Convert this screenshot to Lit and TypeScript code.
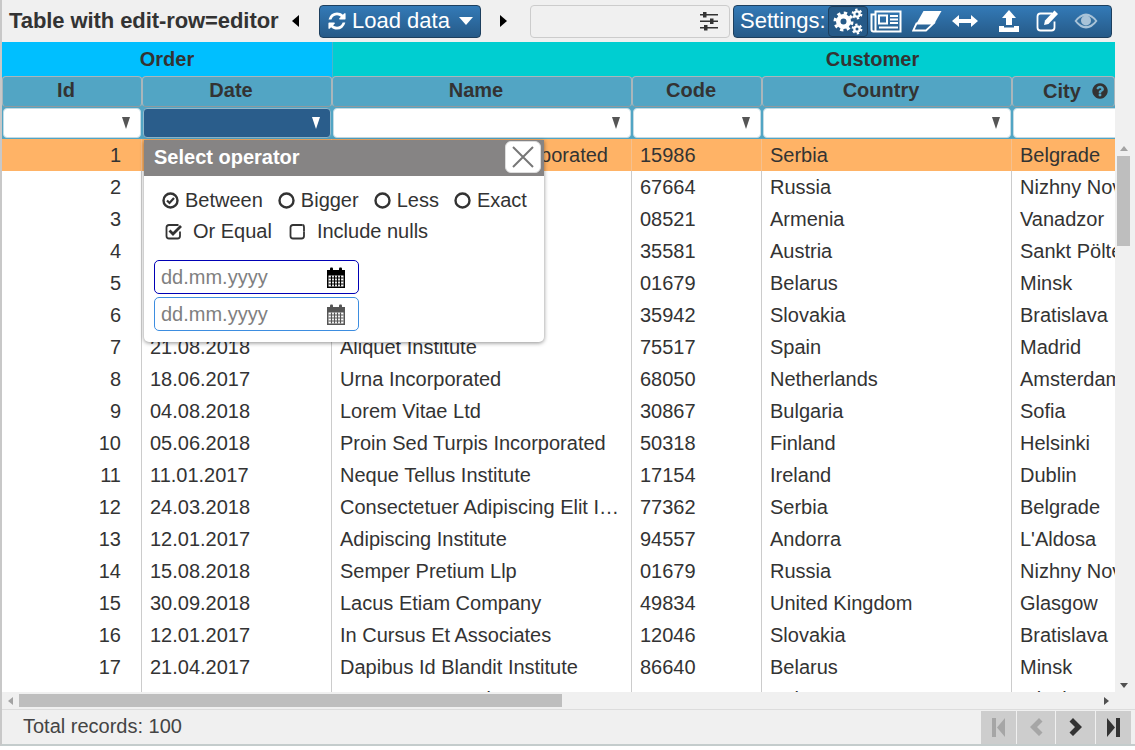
import { LitElement, html, css, svg } from 'lit';
import { customElement } from 'lit/decorators.js';

const refreshPath = 'M1639 1056q0 5-1 7-64 268-268 434.5t-478 166.5q-146 0-282.5-55t-243.5-157l-129 129q-19 19-45 19t-45-19-19-45v-448q0-26 19-45t45-19h448q26 0 45 19t19 45-19 45l-137 137q71 66 161 102t187 36q134 0 250-65t186-179q11-17 53-117 8-23 30-23h192q13 0 22.5 9.5t9.5 22.5zm25-800v448q0 26-19 45t-45 19h-448q-26 0-45-19t-19-45 19-45l138-138q-148-137-349-137-134 0-250 65t-186 179q-11 17-53 117-8 23-30 23h-199q-13 0-22.5-9.5t-9.5-22.5v-7q65-268 270-434.5t480-166.5q146 0 284 55.5t245 156.5l130-129q19-19 45-19t45 19 19 45z';
const questionPath = 'M1024 1376v-192q0-14-9-23t-23-9h-192q-14 0-23 9t-9 23v192q0 14 9 23t23 9h192q14 0 23-9t9-23zm256-672q0-88-55.5-163t-138.5-116-170-41q-243 0-371 213-15 24 8 42l132 100q7 6 19 6 16 0 25-12 53-68 86-92 34-24 86-24 48 0 85.5 26t37.5 59q0 38-20 61t-68 45q-63 28-115.5 86.5t-52.5 125.5v36q0 14 9 23t23 9h192q14 0 23-9t9-23q0-19 21.5-49.5t54.5-49.5q32-18 49-28.5t46-35 44.5-48 28-60.5 12.5-81zm384 192q0 209-103 385.5t-279.5 279.5-385.5 103-385.5-103-279.5-279.5-103-385.5 103-385.5 279.5-279.5 385.5-103 385.5 103 279.5 279.5 103 385.5z';

// outer ring of dashes makes the teeth, thick inner ring the body with its hole
const gear = (cx: number, cy: number, hole: number, body: number, tip: number, teeth: number) => {
  const toothR = (body + tip) / 2 - 0.3;
  const dash = (2 * Math.PI * toothR) / (teeth * 2);
  return svg`<circle cx=${cx} cy=${cy} r=${toothR} fill="none" stroke="#fff" stroke-width=${tip - body + 0.6} stroke-dasharray="${dash} ${dash}"/>
    <circle cx=${cx} cy=${cy} r=${(hole + body) / 2} fill="none" stroke="#fff" stroke-width=${body - hole}/>`;
};

const cogsIcon = html`<svg width="30" height="27" viewBox="0 0 30 27">
  ${gear(10.500, 13.500, 3, 7.500, 10, 8)}${gear(24, 6, 1.500, 3.800, 5.400, 6)}${gear(24, 21, 1.500, 3.800, 5.400, 6)}</svg>`;

const newsIcon = html`<svg width="32" height="25" viewBox="0 0 32 25" fill="none" stroke="#fff">
  <path d="M5.5 2.5h25v20h-25zM5.5 5.5h-4v15q0 2 2 2h2" stroke-width="2"/>
  <rect x="9" y="6.5" width="8" height="8" stroke-width="2"/>
  <path d="M20 7h8M20 10.500h8M20 14h8M9 18.500h19" stroke-width="2"/></svg>`;

const eraserIcon = html`<svg width="30" height="25" viewBox="0 0 30 25">
  <path d="M11.500 2h18l-7 12.500H4.500z" fill="#fff"/>
  <path d="M4.500 14.500L1.200 21.500h12.800l7.500-7z" fill="none" stroke="#fff" stroke-width="1.800"/></svg>`;

const arrowsIcon = html`<svg width="28" height="16" viewBox="0 0 28 16" fill="#fff">
  <path d="M1 8l7-6v4h12V2l7 6-7 6v-4H8v4z"/></svg>`;

const uploadIcon = html`<svg width="22" height="23" viewBox="0 0 22 23" fill="#fff">
  <path d="M11 0l7 8h-4v7H8V8H4z"/>
  <path d="M1 16h5v1.500h10V16h5v6H1z"/></svg>`;

const editIcon = html`<svg width="23" height="22" viewBox="0 0 23 22">
  <path d="M16 3.500H4.500q-3 0-3 3v11q0 3 3 3h11q3 0 3-3v-6" fill="none" stroke="#fff" stroke-width="1.800"/>
  <path d="M18.500.5l3.500 3.500-9.500 10-4.500 1 1-4.500z" fill="#fff"/></svg>`;

const eyeIcon = html`<svg width="24" height="16" viewBox="0 0 24 16">
  <path d="M.5 8Q6 .5 12 .5T23.500 8Q18 15.500 12 15.500T.5 8z" fill="#a9c3d8"/>
  <path d="M2.800 8Q7 3 12 3t9.200 5Q17 13 12 13T2.800 8z" fill="#35709f"/>
  <circle cx="12" cy="7.500" r="5" fill="#a9c3d8"/></svg>`;

const slidersIcon = html`<svg class="sliders" width="20" height="20" viewBox="0 0 20 20" fill="#333">
  <path d="M1 3h18v1.500H1zM1 9.500h18V11H1zM1 16h18v1.500H1z"/>
  <rect x="4" y="1" width="3.500" height="5.500"/><rect x="11" y="7.500" width="3.500" height="5.500"/><rect x="5" y="14" width="3.500" height="5.500"/></svg>`;

const calendar = (c: string) => html`<svg class="cal" width="20" height="21" viewBox="0 0 20 21">
  <rect x="1" y="3" width="18" height="18" fill=${c}/>
  <rect x="4" y="0.500" width="3" height="4" rx="1" fill=${c}/><rect x="13" y="0.500" width="3" height="4" rx="1" fill=${c}/>
  <path d="M2.500 8.500h15v11h-15z" fill="#fff"/>
  <path d="M2.500 11h15M2.500 14h15M2.500 17h15M5.500 8.500v11M8.500 8.500v11M11.500 8.500v11M14.500 8.500v11" stroke=${c} stroke-width="1.200"/></svg>`;

const radioIcon = (on: boolean) => html`<svg class="mark" width="17" height="17" viewBox="0 0 17 17">
  <circle cx="8.500" cy="8.500" r="7" fill="none" stroke="#333" stroke-width="2.400"/>
  ${on ? svg`<path d="M5 8.500l2.500 2.500 4.500-5" fill="none" stroke="#333" stroke-width="2.200"/>` : ''}</svg>`;

const checkIcon = (on: boolean) => html`<svg class="mark" width="18" height="17" viewBox="0 0 18 17">
  <path d="M15 8.500v4.500q0 2.500-2.500 2.500H4q-2.500 0-2.500-2.500V4.500Q1.500 2 4 2h9.500" fill="none" stroke="#333" stroke-width="1.800"/>
  ${on
    ? svg`<path d="M4.500 7.500l3.500 3.500 8-8" fill="none" stroke="#333" stroke-width="2.800"/>`
    : svg`<path d="M13.500 2q1.500 0 1.500 2.500v4" fill="none" stroke="#333" stroke-width="1.800"/>`}</svg>`;

const rows = [
  ['1', '12.04.2017', 'Vestibulum Nunc Incorporated', '15986', 'Serbia', 'Belgrade'],
  ['2', '18.02.2018', 'Mauris Institute', '67664', 'Russia', 'Nizhny Novgorod'],
  ['3', '03.05.2017', 'Tempor Corp', '08521', 'Armenia', 'Vanadzor'],
  ['4', '27.09.2017', 'Eget Ltd', '35581', 'Austria', 'Sankt Pölten'],
  ['5', '09.11.2018', 'Donec Associates', '01679', 'Belarus', 'Minsk'],
  ['6', '14.07.2018', 'Nunc Foundation', '35942', 'Slovakia', 'Bratislava'],
  ['7', '21.08.2018', 'Aliquet Institute', '75517', 'Spain', 'Madrid'],
  ['8', '18.06.2017', 'Urna Incorporated', '68050', 'Netherlands', 'Amsterdam'],
  ['9', '04.08.2018', 'Lorem Vitae Ltd', '30867', 'Bulgaria', 'Sofia'],
  ['10', '05.06.2018', 'Proin Sed Turpis Incorporated', '50318', 'Finland', 'Helsinki'],
  ['11', '11.01.2017', 'Neque Tellus Institute', '17154', 'Ireland', 'Dublin'],
  ['12', '24.03.2018', 'Consectetuer Adipiscing Elit Institute', '77362', 'Serbia', 'Belgrade'],
  ['13', '12.01.2017', 'Adipiscing Institute', '94557', 'Andorra', "L'Aldosa"],
  ['14', '15.08.2018', 'Semper Pretium Llp', '01679', 'Russia', 'Nizhny Novgorod'],
  ['15', '30.09.2018', 'Lacus Etiam Company', '49834', 'United Kingdom', 'Glasgow'],
  ['16', '12.01.2017', 'In Cursus Et Associates', '12046', 'Slovakia', 'Bratislava'],
  ['17', '21.04.2017', 'Dapibus Id Blandit Institute', '86640', 'Belarus', 'Minsk'],
  ['18', '21.08.2018', 'Cras Tempus Ltd', '64646', 'Belarus', 'Minsk'],
];

const columns = ['Id', 'Date', 'Name', 'Code', 'Country', 'City'];

@customElement('app-root')
export class AppRoot extends LitElement {
  static styles = css`
    :host {
      display: block;
      width: 1135px;
      height: 746px;
      font-family: 'Liberation Sans', Arial, sans-serif;
      color: #333;
      font-size: 20px;
    }
    * { box-sizing: border-box; }
    .frame {
      position: relative;
      height: 746px;
      display: flex;
      flex-direction: column;
      background: #f0f0f0;
      border-left: 2px solid #c8c8c8;
      border-bottom: 2px solid #c4cccc;
      overflow: hidden;
    }

    .toolbar {
      height: 42px;
      flex: none;
      display: flex;
      align-items: center;
    }
    .title {
      font-size: 22px;
      font-weight: bold;
      letter-spacing: -0.08px;
      margin-left: 7px;
      width: 270px;
      white-space: nowrap;
    }
    .tri-l, .tri-r { width: 0; height: 0; border-top: 6px solid transparent; border-bottom: 6px solid transparent; }
    .tri-l { margin-left: 13px; border-right: 7px solid #000; }
    .tri-r { margin-left: 19px; border-left: 7px solid #000; }
    .btn {
      height: 33px;
      border: 1px solid #1d3f5e;
      border-radius: 4px;
      background: linear-gradient(#337ab7, #265a88);
      color: #fff;
      font-size: 22px;
      display: flex;
      align-items: center;
    }
    .load { width: 162px; margin-left: 20px; padding-left: 7px; }
    .load svg { width: 20px; height: 20px; fill: #fff; margin-right: 5px; }
    .caret { margin-left: 9px; border-top: 8px solid #fff; border-left: 7px solid transparent; border-right: 7px solid transparent; }
    .search {
      width: 200px;
      height: 33px;
      margin-left: 23px;
      border: 1px solid #ccc;
      border-radius: 4px;
      display: flex;
      align-items: center;
      justify-content: flex-end;
      padding-right: 10px;
    }
    .settings { width: 379px; margin-left: 3px; padding-left: 6px; }
    .icon-btn { display: flex; align-items: center; justify-content: center; }
    .cog {
      width: 40px;
      height: 31px;
      margin-left: 2px;
      border: 1px solid #1d3f5e;
      border-radius: 4px;
      background: #265a88;
    }
    .news { margin-left: 2px; }
    .erase { margin-left: 10px; }
    .arrows { margin-left: 9px; }
    .upload { margin-left: 19px; }
    .edit { margin-left: 16px; }
    .eye { margin-left: 15px; }

    .table {
      flex: none;
      display: flex;
      width: 1133px;
      height: 650px;
    }
    .view {
      width: 1113px;
      height: 650px;
      overflow: hidden;
      background: #fff;
    }
    .inner { width: 1410px; }
    .groups { height: 33px; display: grid; grid-template-columns: 330px 1080px; font-weight: bold; line-height: 35px; text-align: center; }
    .g-order { background: #00bfff; }
    .g-customer { background: #00ced1; border-left: 1px solid #4ab5cc; }
    .cols, .row, .filters {
      display: grid;
      grid-template-columns: 140px 190px 300px 130px 250px 190px;
    }
    .cols { height: 32px; background: #52a5c4; border-top: 1px solid #4ab5cc; }
    .head {
      border: 1px solid #a9b6bb;
      border-bottom-color: #8e9a9f;
      border-radius: 4px;
      font-weight: bold;
      line-height: 26px;
      text-align: center;
      padding-right: 12px;
    }
    .head.city { text-align: left; padding: 0 0 2px 30px; display: flex; align-items: center; gap: 10px; width: 103px; white-space: nowrap; }
    .head.city svg { width: 18px; height: 18px; fill: #333; flex: none; }
    .filters { height: 32px; background: #52a5c4; padding-bottom: 1px; }
    .filter {
      margin: 1px 1px 0 1px;
      background: #fff;
      border-radius: 4px;
      display: flex;
      align-items: center;
      justify-content: flex-end;
      padding-right: 10px;
      border: 1px solid #c4dbe4;
    }
    .filter.on { background: #2a5d8b; border-color: #8fb8cc; }
    .filter i { border-top: 12px solid #555; border-left: 4px solid transparent; border-right: 4px solid transparent; }
    .filter.on i { border-top-color: #fff; }
    .filter.last i { display: none; }
    .row { height: 32px; line-height: 32px; }
    .row.sel { background: #ffb366; }
    .cell {
      padding: 0 8px;
      border-right: 1px solid #ccc;
      white-space: nowrap;
      overflow: hidden;
      text-overflow: ellipsis;
    }
    .cell.num { text-align: right; padding-right: 20px; }
    .row .cell:last-child { border-right: 0; overflow: visible; }
    .row.sel .cell { border-right-color: #f5c08f; }

    .vscroll { width: 18px; position: relative; }
    .vup { position: absolute; left: 5px; top: 104px; border-bottom: 5px solid #a3a3a3; border-left: 4px solid transparent; border-right: 4px solid transparent; }
    .vthumb { position: absolute; left: 2px; top: 114px; width: 13px; height: 90px; background: #bebebe; }
    .vdown { position: absolute; left: 5px; top: 641px; border-top: 5px solid #505050; border-left: 4px solid transparent; border-right: 4px solid transparent; }

    .hscroll { flex: none; height: 17px; position: relative; }
    .hleft { position: absolute; left: 6px; top: 5px; border-right: 5px solid #a3a3a3; border-top: 4px solid transparent; border-bottom: 4px solid transparent; }
    .hthumb { position: absolute; left: 17px; top: 2px; width: 543px; height: 13px; background: #bebebe; }
    .hright { position: absolute; left: 1102px; top: 5px; border-left: 5px solid #505050; border-top: 4px solid transparent; border-bottom: 4px solid transparent; }

    .footer {
      flex: 1;
      display: flex;
      align-items: center;
      justify-content: space-between;
      border-top: 1px solid #dcdcdc;
      padding-left: 21px;
      padding-right: 4px;
      color: #444;
    }
    .total { margin-bottom: 2px; }
    .pager { display: flex; gap: 1px; }
    .pg { height: 33px; background: #cdcdcd; display: flex; align-items: center; justify-content: center; }
    .pg svg { fill: #333; }
    .pg.off svg { fill: #a6a6a6; }

    .popup {
      position: absolute;
      left: 142px;
      top: 140px;
      width: 400px;
      height: 202px;
      background: #fff;
      border-radius: 0 0 5px 5px;
      box-shadow: 0 1px 4px rgba(0, 0, 0, 0.45);
    }
    .pop-head {
      height: 36px;
      background: #868484;
      color: #fff;
      font-weight: bold;
      display: flex;
      align-items: center;
      justify-content: space-between;
      padding: 0 3px 2px 10px;
    }
    .close {
      width: 36px;
      height: 32px;
      align-self: flex-start;
      margin-top: 1px;
      background: #fff;
      border: 1px solid #ddd;
      border-radius: 6px;
      display: flex;
      align-items: center;
      justify-content: center;
    }
    .pop-body { padding: 9px 10px 0; }
    .opts { display: flex; align-items: center; height: 31px; padding-left: 8px; white-space: nowrap; }
    .opt { display: flex; align-items: center; gap: 6px; margin-right: 15px; }
    .opts.two { padding-left: 11px; }
    .opts.two .opt { gap: 10px; margin-right: 17px; }
    .date {
      width: 205px;
      height: 34px;
      border: 1px solid #3d8de0;
      border-radius: 5px;
      display: flex;
      align-items: center;
      justify-content: space-between;
      padding: 0 12px 0 6px;
      color: #808080;
      margin-top: 3px;
    }
    .date.focus { border-color: #0000b5; margin-top: 13px; }
  `;

  render() {
    return html`
      <div class="frame">
        <div class="toolbar">
          <div class="title">Table with edit-row=editor</div>
          <div class="tri-l"></div>
          <div class="btn load">
            <svg viewBox="0 0 1792 1792"><path d=${refreshPath}/></svg>
            Load data<span class="caret"></span>
          </div>
          <div class="tri-r"></div>
          <div class="search">${slidersIcon}</div>
          <div class="btn settings">
            Settings:
            <span class="icon-btn cog">${cogsIcon}</span>
            <span class="icon-btn news">${newsIcon}</span>
            <span class="icon-btn erase">${eraserIcon}</span>
            <span class="icon-btn arrows">${arrowsIcon}</span>
            <span class="icon-btn upload">${uploadIcon}</span>
            <span class="icon-btn edit">${editIcon}</span>
            <span class="icon-btn eye">${eyeIcon}</span>
          </div>
        </div>

        <div class="table">
          <div class="view">
            <div class="inner">
              <div class="groups">
                <div class="g-order">Order</div>
                <div class="g-customer">Customer</div>
              </div>
              <div class="cols">
                ${columns.map((c) => c === 'City'
                  ? html`<div class="head city">${c}<svg viewBox="0 0 1792 1792"><path d=${questionPath}/></svg></div>`
                  : html`<div class="head">${c}</div>`)}
              </div>
              <div class="filters">
                ${columns.map((c) => html`<div class="filter ${c === 'Date' ? 'on' : ''} ${c === 'City' ? 'last' : ''}"><i></i></div>`)}
              </div>
              ${rows.map((r, i) => html`
                <div class="row ${i === 0 ? 'sel' : ''}">
                  ${r.map((v, j) => html`<div class="cell ${j === 0 ? 'num' : ''}">${v}</div>`)}
                </div>`)}
            </div>
          </div>
          <div class="vscroll">
            <div class="vup"></div>
            <div class="vthumb"></div>
            <div class="vdown"></div>
          </div>
        </div>

        <div class="hscroll">
          <div class="hleft"></div>
          <div class="hthumb"></div>
          <div class="hright"></div>
        </div>

        <div class="footer">
          <span class="total">Total records: 100</span>
          <div class="pager">
            <div class="pg off" style="width:35px"><svg width="13" height="19" viewBox="0 0 13 19"><path d="M0 0h4v19H0zM13 0v19L5 9.500z"/></svg></div>
            <div class="pg off" style="width:38px"><svg width="14" height="20" viewBox="0 0 14 20"><path d="M10 1l3.500 3.500L8 10l5.500 5.500L10 19l-9-9z"/></svg></div>
            <div class="pg" style="width:39px"><svg width="14" height="20" viewBox="0 0 14 20"><path d="M4 1L.5 4.500 6 10 .5 15.500 4 19l9-9z"/></svg></div>
            <div class="pg" style="width:35px"><svg width="13" height="19" viewBox="0 0 13 19"><path d="M13 0H9v19h4zM0 0v19l8-9.500z"/></svg></div>
          </div>
        </div>

        <div class="popup">
          <div class="pop-head">
            Select operator
            <div class="close">
              <svg width="22" height="22" viewBox="0 0 22 22"><path d="M1 1l20 20M21 1L1 21" stroke="#777" stroke-width="2"/></svg>
            </div>
          </div>
          <div class="pop-body">
            <div class="opts">
              <span class="opt">${radioIcon(true)}Between</span>
              <span class="opt">${radioIcon(false)}Bigger</span>
              <span class="opt">${radioIcon(false)}Less</span>
              <span class="opt">${radioIcon(false)}Exact</span>
            </div>
            <div class="opts two">
              <span class="opt">${checkIcon(true)}Or Equal</span>
              <span class="opt">${checkIcon(false)}Include nulls</span>
            </div>
            <div class="date focus">dd.mm.yyyy${calendar('#000')}</div>
            <div class="date">dd.mm.yyyy${calendar('#555')}</div>
          </div>
        </div>
      </div>
    `;
  }
}
